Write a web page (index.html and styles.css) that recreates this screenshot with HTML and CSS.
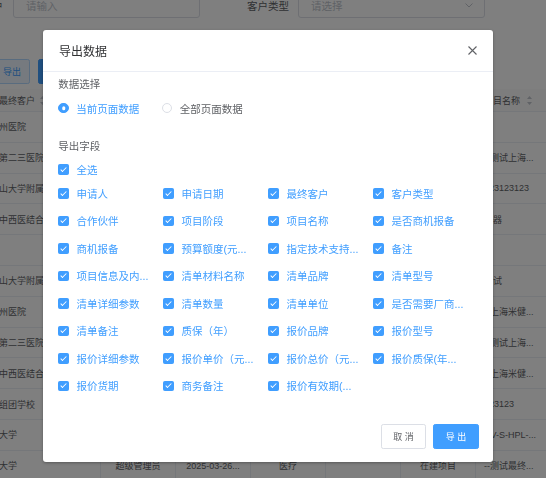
FILE: index.html
```html
<!DOCTYPE html>
<html lang="zh-CN">
<head>
<meta charset="utf-8">
<title>导出数据</title>
<link rel="stylesheet" href="styles.css">
</head>
<body>
<div class="page">
  <div class="search">
    <label class="flabel">最终客户</label>
    <div class="input"><span>请输入</span></div>
    <label class="flabel flabel-2">客户类型</label>
    <div class="input select"><span>请选择</span>
      <svg class="arrow" viewBox="0 0 8 5"><path d="M0.5 0.5 L4 4 L7.5 0.5" fill="none" stroke="#c0c4cc" stroke-width="1"/></svg>
    </div>
  </div>
  <div class="toolbar">
    <button class="tbtn tbtn-plain">导出</button>
    <button class="tbtn tbtn-primary">新增</button>
  </div>
  <div class="table">
    <div class="tr th">
      <div class="td c0">最终客户<svg class="caret" viewBox="0 0 5 9"><path d="M2.5 0 L5 3 H0 Z M2.5 9 L5 6 H0 Z" fill="#c0c4cc"/></svg></div>
      <div class="td"></div>
      <div class="td"></div>
      <div class="td"></div>
      <div class="td"></div>
      <div class="td"></div>
      <div class="td cl">项目名称<svg class="caret caret-r" viewBox="0 0 5 9"><path d="M2.5 0 L5 3 H0 Z M2.5 9 L5 6 H0 Z" fill="#c0c4cc"/></svg></div>
    </div>
    <div class="tr"><div class="td c0">州医院</div><div class="td"></div><div class="td"></div><div class="td"></div><div class="td"></div><div class="td"></div><div class="td cl"></div></div>
    <div class="tr"><div class="td c0">第二三医院</div><div class="td"></div><div class="td"></div><div class="td"></div><div class="td"></div><div class="td"></div><div class="td cl">--测试上海...</div></div>
    <div class="tr"><div class="td c0">山大学附属第一</div><div class="td"></div><div class="td"></div><div class="td"></div><div class="td"></div><div class="td"></div><div class="td cl">123123123</div></div>
    <div class="tr"><div class="td c0">中西医结合医院</div><div class="td"></div><div class="td"></div><div class="td"></div><div class="td"></div><div class="td"></div><div class="td cl">仪器</div></div>
    <div class="tr"><div class="td c0"></div><div class="td"></div><div class="td"></div><div class="td"></div><div class="td"></div><div class="td"></div><div class="td cl"></div></div>
    <div class="tr"><div class="td c0">山大学附属第一</div><div class="td"></div><div class="td"></div><div class="td"></div><div class="td"></div><div class="td"></div><div class="td cl">测试</div></div>
    <div class="tr"><div class="td c0">州医院</div><div class="td"></div><div class="td"></div><div class="td"></div><div class="td"></div><div class="td"></div><div class="td cl">--上海米健...</div></div>
    <div class="tr"><div class="td c0">第二三医院</div><div class="td"></div><div class="td"></div><div class="td"></div><div class="td"></div><div class="td"></div><div class="td cl">--测试上海...</div></div>
    <div class="tr"><div class="td c0">中西医结合医院</div><div class="td"></div><div class="td"></div><div class="td"></div><div class="td"></div><div class="td"></div><div class="td cl">--上海米健...</div></div>
    <div class="tr"><div class="td c0">组团学校</div><div class="td"></div><div class="td"></div><div class="td"></div><div class="td"></div><div class="td"></div><div class="td cl">123123</div></div>
    <div class="tr"><div class="td c0">大学</div><div class="td"></div><div class="td"></div><div class="td"></div><div class="td"></div><div class="td"></div><div class="td cl">DV-S-HPL-...</div></div>
    <div class="tr"><div class="td c0">大学</div><div class="td">超级管理员</div><div class="td">2025-03-26...</div><div class="td">医疗</div><div class="td"></div><div class="td">在建项目</div><div class="td cl">--测试最终...</div></div>
  </div>
</div>

<div class="mask"></div>

<div class="dialog">
  <div class="dialog-header">
    <span class="dialog-title">导出数据</span>
    <svg class="close" viewBox="0 0 9 9"><path d="M0.5 0.5 L8.5 8.5 M8.5 0.5 L0.5 8.5" stroke="#606266" stroke-width="1.1" fill="none"/></svg>
  </div>
  <div class="dialog-body">
    <div class="sec-label">数据选择</div>
    <div class="radios">
      <span class="radio radio-on"><span class="dot"></span>当前页面数据</span>
      <span class="radio"><span class="dot"></span>全部页面数据</span>
    </div>
    <div class="sec-label sec-label-2">导出字段</div>
    <div class="cb cb-all"><span class="box"></span><span class="cb-text">全选</span></div>
    <div class="fields">
      <div class="cb"><span class="box"></span><span class="cb-text">申请人</span></div>
      <div class="cb"><span class="box"></span><span class="cb-text">申请日期</span></div>
      <div class="cb"><span class="box"></span><span class="cb-text">最终客户</span></div>
      <div class="cb"><span class="box"></span><span class="cb-text">客户类型</span></div>
      <div class="cb"><span class="box"></span><span class="cb-text">合作伙伴</span></div>
      <div class="cb"><span class="box"></span><span class="cb-text">项目阶段</span></div>
      <div class="cb"><span class="box"></span><span class="cb-text">项目名称</span></div>
      <div class="cb"><span class="box"></span><span class="cb-text">是否商机报备</span></div>
      <div class="cb"><span class="box"></span><span class="cb-text">商机报备</span></div>
      <div class="cb"><span class="box"></span><span class="cb-text">预算额度(元...</span></div>
      <div class="cb"><span class="box"></span><span class="cb-text">指定技术支持...</span></div>
      <div class="cb"><span class="box"></span><span class="cb-text">备注</span></div>
      <div class="cb"><span class="box"></span><span class="cb-text">项目信息及内...</span></div>
      <div class="cb"><span class="box"></span><span class="cb-text">清单材料名称</span></div>
      <div class="cb"><span class="box"></span><span class="cb-text">清单品牌</span></div>
      <div class="cb"><span class="box"></span><span class="cb-text">清单型号</span></div>
      <div class="cb"><span class="box"></span><span class="cb-text">清单详细参数</span></div>
      <div class="cb"><span class="box"></span><span class="cb-text">清单数量</span></div>
      <div class="cb"><span class="box"></span><span class="cb-text">清单单位</span></div>
      <div class="cb"><span class="box"></span><span class="cb-text">是否需要厂商...</span></div>
      <div class="cb"><span class="box"></span><span class="cb-text">清单备注</span></div>
      <div class="cb"><span class="box"></span><span class="cb-text">质保（年）</span></div>
      <div class="cb"><span class="box"></span><span class="cb-text">报价品牌</span></div>
      <div class="cb"><span class="box"></span><span class="cb-text">报价型号</span></div>
      <div class="cb"><span class="box"></span><span class="cb-text">报价详细参数</span></div>
      <div class="cb"><span class="box"></span><span class="cb-text">报价单价（元...</span></div>
      <div class="cb"><span class="box"></span><span class="cb-text">报价总价（元...</span></div>
      <div class="cb"><span class="box"></span><span class="cb-text">报价质保(年...</span></div>
      <div class="cb"><span class="box"></span><span class="cb-text">报价货期</span></div>
      <div class="cb"><span class="box"></span><span class="cb-text">商务备注</span></div>
      <div class="cb"><span class="box"></span><span class="cb-text">报价有效期(...</span></div>
    </div>
  </div>
  <div class="dialog-footer">
    <button class="btn">取 消</button>
    <button class="btn btn-primary">导 出</button>
  </div>
</div>
</body>
</html>
```

FILE: styles.css
```css
* { box-sizing: border-box; }
html, body {
  margin: 0;
  padding: 0;
  width: 546px;
  height: 478px;
  overflow: hidden;
}
body {
  font-family: "Liberation Sans", "Noto Sans CJK SC", sans-serif;
  background: #fff;
  color: #606266;
  position: relative;
}

/* ---------- background page ---------- */
.search {
  display: flex;
  align-items: center;
  height: 26px;
  margin: -8px 0 0 -39px;
}
.flabel {
  width: 42px;
  flex: none;
  font-size: 10.5px;
  color: #606266;
  margin-right: 10px;
  white-space: nowrap;
}
.flabel-2 { margin-left: 47px; margin-right: 9px; }
.input {
  width: 187px;
  height: 26px;
  flex: none;
  border: 1px solid #dcdfe6;
  border-radius: 3px;
  display: flex;
  align-items: center;
  padding: 0 11px 0 12px;
  font-size: 10.5px;
  color: #c0c4cc;
}
.select { justify-content: space-between; }
.arrow { width: 8px; height: 5px; }

.toolbar {
  display: flex;
  gap: 8px;
  margin: 41px 0 0 -10px;
  height: 25px;
}
.tbtn {
  height: 25px;
  font-size: 9px;
  font-family: inherit;
  border-radius: 2.25px;
  border: 1px solid;
  padding: 0 8px;
}
.tbtn-plain { width: 40px; background: #ecf5ff; border-color: #b3d8ff; color: #409eff; text-align: right; }
.tbtn-primary { width: 56px; background: #409eff; border-color: #409eff; color: #fff; }

.table {
  margin: 5px 0 0 -20px;
  width: 571px;
}
.tr {
  display: grid;
  grid-template-columns: 121px repeat(5, 75px) 75px;
  height: 30.8px;
  border-bottom: 1px solid #ebeef5;
}
.th { height: 23px; background: #fafafa; }
.td {
  display: flex;
  align-items: center;
  justify-content: center;
  font-size: 9px;
  white-space: nowrap;
  overflow: hidden;
  border-right: 1px solid #ebeef5;
  color: #606266;
}
.c0 { justify-content: flex-start; padding-left: 19px; }
.cl { justify-content: flex-start; padding-left: 8px; border-right: 0; }
.caret { width: 5px; height: 9px; margin-left: 5px; flex: none; }
.caret-r { margin-left: 7px; }

.mask {
  position: fixed;
  inset: 0;
  background: rgba(0, 0, 0, 0.5);
}

/* ---------- dialog ---------- */
.dialog {
  position: absolute;
  left: 43px;
  top: 30px;
  width: 450px;
  height: 432px;
  background: #fff;
  border-radius: 3px;
  box-shadow: 0 1px 3px rgba(0, 0, 0, 0.3);
  display: flex;
  flex-direction: column;
}
.dialog-header {
  height: 42px;
  flex: none;
  display: flex;
  align-items: center;
  justify-content: space-between;
  padding: 0 16.5px 0 16px;
  border-bottom: 1px solid #ebeef5;
}
.dialog-title { font-size: 12px; color: #303133; }
.close { width: 9px; height: 9px; }

.dialog-body {
  flex: 1;
  padding: 4.5px 15.3px 0;
}
.sec-label {
  font-size: 10.5px;
  line-height: 15px;
  color: #606266;
}
.sec-label-2 { margin-top: 23px; }

.radios {
  display: flex;
  align-items: center;
  height: 15px;
  margin-top: 9px;
}
.radio {
  display: flex;
  align-items: center;
  margin-right: 22.5px;
  font-size: 10.5px;
  color: #606266;
  white-space: nowrap;
}
.dot {
  width: 10.5px;
  height: 10.5px;
  border: 1px solid #dcdfe6;
  border-radius: 50%;
  background: #fff;
  margin-right: 7.5px;
  position: relative;
  flex: none;
}
.radio-on { color: #409eff; }
.radio-on .dot { border-color: #409eff; background: #409eff; }
.radio-on .dot::after {
  content: "";
  position: absolute;
  left: 50%;
  top: 50%;
  width: 3.5px;
  height: 3.5px;
  border-radius: 50%;
  background: #fff;
  transform: translate(-50%, -50%);
}

.cb {
  display: flex;
  align-items: center;
  height: 15px;
  font-size: 10.5px;
  color: #409eff;
  white-space: nowrap;
}
.cb-all { margin-top: 8.5px; }
.box {
  width: 10.5px;
  height: 10.5px;
  flex: none;
  background: #409eff;
  border: 1px solid #409eff;
  border-radius: 1.5px;
  margin-right: 7.8px;
  position: relative;
}
.box::after {
  content: "";
  box-sizing: content-box;
  position: absolute;
  left: 2.7px;
  top: 0.5px;
  width: 2.2px;
  height: 5px;
  border: 1px solid #fff;
  border-left: 0;
  border-top: 0;
  transform: rotate(45deg);
}
.fields {
  display: grid;
  grid-template-columns: repeat(4, 105px);
  row-gap: 12.5px;
  margin-top: 8.8px;
}

.dialog-footer {
  flex: none;
  display: flex;
  justify-content: flex-end;
  gap: 7.5px;
  padding: 0 14.5px 13.5px;
}
.btn {
  height: 24.5px;
  padding: 0 11.25px;
  font-size: 9px;
  font-family: inherit;
  border-radius: 2.25px;
  border: 1px solid #dcdfe6;
  background: #fff;
  color: #606266;
}
.btn-primary { background: #409eff; border-color: #409eff; color: #fff; }
```
